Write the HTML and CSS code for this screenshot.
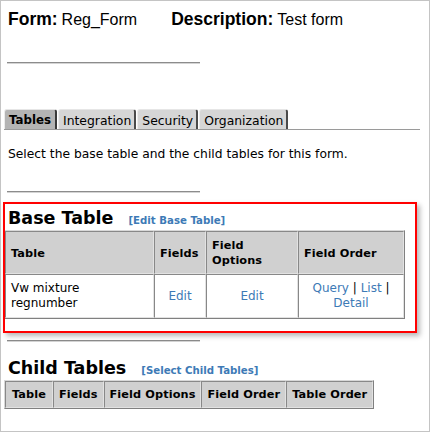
FILE: index.html
```html
<!DOCTYPE html>
<html>
<head>
<meta charset="utf-8">
<link rel="stylesheet" href="styles.css">
</head>
<body>
<div class="frame">
  <div class="formline">
    <span class="lbl">Form:</span><span class="val">Reg_Form</span>
    <span class="lbl desc">Description:</span><span class="val">Test form</span>
  </div>
  <div class="rule rule-first"></div>

  <div class="tabs">
    <div class="tab active">Tables</div>
    <div class="tab">Integration</div>
    <div class="tab">Security</div>
    <div class="tab">Organization</div>
  </div>

  <p class="intro">Select the base table and the child tables for this form.</p>
  <div class="rule rule-second"></div>

  <div class="section base">
    <div class="heading"><h2>Base Table</h2><a class="hlink">[Edit Base Table]</a></div>
    <table class="grid">
      <tr>
        <th class="c-table">Table</th>
        <th class="c-fields">Fields</th>
        <th class="c-opts">Field Options</th>
        <th class="c-order">Field Order</th>
      </tr>
      <tr>
        <td>Vw mixture regnumber</td>
        <td class="ctr"><a>Edit</a></td>
        <td class="ctr"><a>Edit</a></td>
        <td class="ctr"><a>Query</a> | <a>List</a> | <a>Detail</a></td>
      </tr>
    </table>
  </div>
  <div class="rule rule-third"></div>

  <div class="section child">
    <div class="heading"><h2>Child Tables</h2><a class="hlink">[Select Child Tables]</a></div>
    <table class="grid">
      <tr>
        <th class="first">Table</th>
        <th>Fields</th>
        <th>Field Options</th>
        <th>Field Order</th>
        <th>Table Order</th>
      </tr>
    </table>
  </div>

  <div class="highlight"></div>
</div>
</body>
</html>
```

FILE: styles.css
```css
html, body {
  margin: 0;
  padding: 0;
  background: #fff;
}
.frame {
  position: relative;
  box-sizing: border-box;
  width: 430px;
  height: 432px;
  border: 1px solid #c4c4c4;
  padding: 8px 0 0 3px;
  font-family: "DejaVu Sans", Verdana, sans-serif;
  font-size: 12px;
  color: #000;
  overflow: hidden;
}
.formline {
  display: flex;
  align-items: baseline;
  margin-left: 4px;
  font-family: "Liberation Sans", Arial, sans-serif;
  line-height: 21px;
}
.lbl {
  font-weight: bold;
  font-size: 17.5px;
  margin-right: 4px;
}
.val {
  font-size: 16px;
}
.desc {
  margin-left: 34px;
}
.rule {
  width: 193px;
  height: 1px;
  margin-left: 3px;
  background: #8c8c8c;
  border-bottom: 1px solid #d4d4d4;
}
.rule-first { margin-top: 32px; }
.rule-second { margin-top: 0; }
.rule-third { margin-top: 21px; }

.tabs {
  display: flex;
  margin-top: 45px;
  width: 416px;
  border-bottom: 1px solid #9a9a9a;
  height: 20px;
  gap: 1px;
}
.tab {
  box-sizing: border-box;
  height: 20px;
  padding: 2px 3px 0 4px;
  font-size: 12.4px;
  line-height: 17px;
  background: #d6d6d6;
  border-top: 1px solid #e6e6e6;
  border-left: 1px solid #ececec;
  border-right: 2px solid #4a4a4a;
  border-radius: 3px 3px 0 0;
  color: #000;
  white-space: nowrap;
}
.tab.active {
  background: #b4b4b4;
  font-weight: bold;
  font-size: 11.8px;
  border-right-color: #3a3a3a;
  padding-left: 4px;
  padding-right: 4px;
}
.intro {
  margin: 17px 0 0 4px;
  line-height: 15px;
  font-size: 12.3px;
  height: 44px;
}

.section { margin: 0; }
.base { margin-top: 15px; }
.child { margin-top: 16px; }
.heading {
  display: flex;
  align-items: baseline;
  margin-left: 4px;
  gap: 15px;
  height: 21px;
  line-height: 21px;
  margin-bottom: 1px;
}
h2 {
  margin: 0;
  font-size: 17.5px;
  font-weight: bold;
}
.hlink {
  font-size: 10.2px;
  line-height: 12px;
  font-weight: bold;
  color: #3d7ab6;
}
a { color: #3d7ab6; }

.grid {
  border-collapse: separate;
  border-spacing: 0;
  border: 1px solid;
  border-color: #d8d8d8 #808080 #808080 #d8d8d8;
}
.grid th, .grid td {
  border: 1px solid;
  border-color: #888 #e2e2e2 #e2e2e2 #888;
  padding: 5px 5px;
  line-height: 15px;
  text-align: left;
  vertical-align: middle;
}
.grid th {
  background: #d0d0d0;
  font-size: 11.3px;
  font-weight: bold;
  letter-spacing: 0.1px;
  white-space: nowrap;
}
.grid th.first {
  padding-left: 6px;
  padding-right: 6px;
}
.base .grid th {
  white-space: normal;
  padding-top: 6px;
  padding-bottom: 5px;
}
.grid td {
  background: #fff;
  font-size: 12px;
  padding-top: 6px;
  padding-bottom: 6px;
}
.grid td.ctr { text-align: center; }
.c-table { width: 137px; }
.c-fields { width: 40px; }
.c-opts { width: 80px; }
.c-order { width: 94px; }

.highlight {
  position: absolute;
  left: 2px;
  top: 201px;
  width: 414px;
  height: 131px;
  box-sizing: border-box;
  border: 2px solid #ff0000;
  box-shadow: 3px 3px 5px rgba(0, 0, 0, 0.28);
  pointer-events: none;
}
```
